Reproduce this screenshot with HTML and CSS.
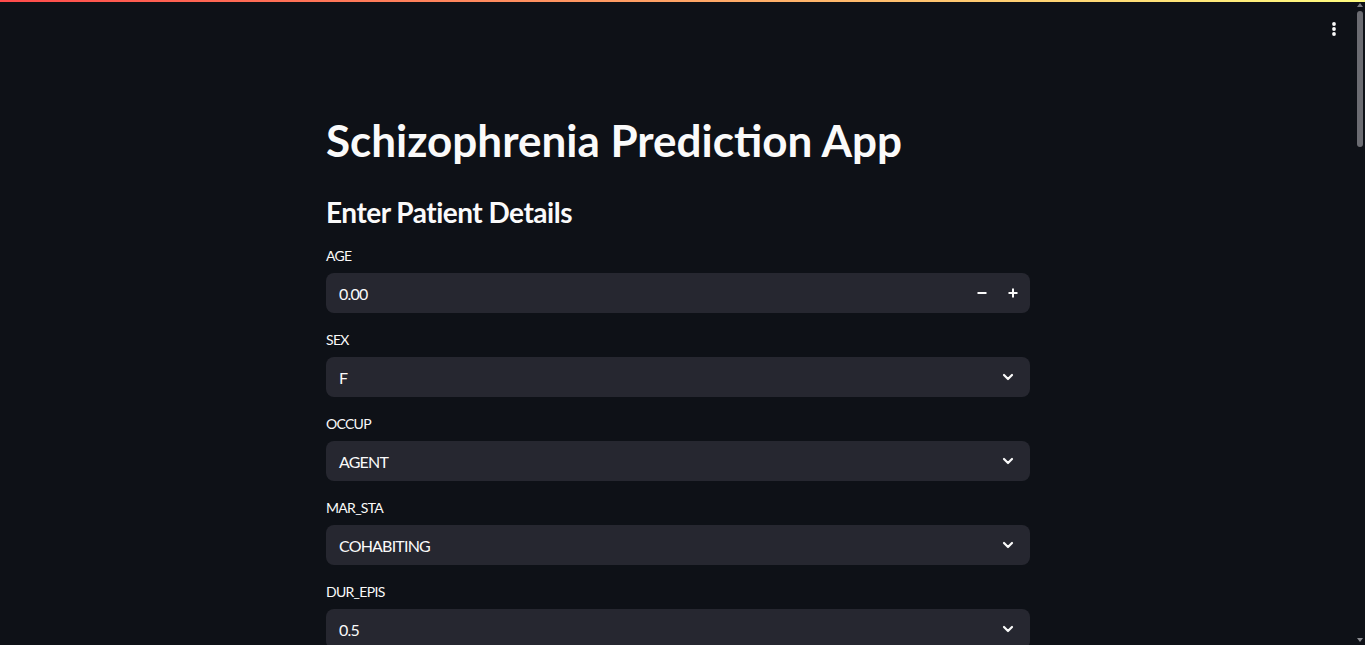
FILE: index.html
```html
<!DOCTYPE html>
<html lang="en">
<head>
<meta charset="utf-8">
<title>Schizophrenia Prediction App</title>
<link rel="stylesheet" href="styles.css">
</head>
<body>
<div class="decoration"></div>
<header class="toolbar">
  <button class="menu" aria-label="Main menu">
    <svg width="16" height="16" viewBox="0 0 16 16"><circle cx="8" cy="3" r="1.9" fill="#fafafa"/><circle cx="8" cy="8" r="1.9" fill="#fafafa"/><circle cx="8" cy="13" r="1.9" fill="#fafafa"/></svg>
  </button>
</header>
<div class="scrollbar" aria-hidden="true">
  <span class="arrow up"></span>
  <span class="thumb"></span>
  <span class="arrow down"></span>
</div>
<div class="app">
<main class="block">
  <h1 class="title">Schizophrenia Prediction App</h1>
  <h2 class="subtitle">Enter Patient Details</h2>

  <div class="widget">
    <label class="label">AGE</label>
    <div class="field number">
      <span class="value">0.00</span>
      <div class="steps">
        <button class="step" aria-label="minus"><svg width="12" height="12" viewBox="0 0 12 12"><path d="M1.5 6h9" stroke="#fafafa" stroke-width="2"/></svg></button>
        <button class="step" aria-label="plus"><svg width="12" height="12" viewBox="0 0 12 12"><path d="M1.5 6h9M6 1.5v9" stroke="#fafafa" stroke-width="2"/></svg></button>
      </div>
    </div>
  </div>

  <div class="widget">
    <label class="label">SEX</label>
    <div class="field select"><span class="value">F</span><svg class="chev" width="16" height="16" viewBox="0 0 16 16"><path d="M4 6l4 4 4-4" fill="none" stroke="#fafafa" stroke-width="2.2" stroke-linecap="round" stroke-linejoin="round"/></svg></div>
  </div>

  <div class="widget">
    <label class="label">OCCUP</label>
    <div class="field select"><span class="value">AGENT</span><svg class="chev" width="16" height="16" viewBox="0 0 16 16"><path d="M4 6l4 4 4-4" fill="none" stroke="#fafafa" stroke-width="2.2" stroke-linecap="round" stroke-linejoin="round"/></svg></div>
  </div>

  <div class="widget">
    <label class="label">MAR_STA</label>
    <div class="field select"><span class="value">COHABITING</span><svg class="chev" width="16" height="16" viewBox="0 0 16 16"><path d="M4 6l4 4 4-4" fill="none" stroke="#fafafa" stroke-width="2.2" stroke-linecap="round" stroke-linejoin="round"/></svg></div>
  </div>

  <div class="widget">
    <label class="label">DUR_EPIS</label>
    <div class="field select"><span class="value">0.5</span><svg class="chev" width="16" height="16" viewBox="0 0 16 16"><path d="M4 6l4 4 4-4" fill="none" stroke="#fafafa" stroke-width="2.2" stroke-linecap="round" stroke-linejoin="round"/></svg></div>
  </div>
</main>
</div>
</body>
</html>
```
FILE: styles.css
```css
html {
  background: #0e1117;
}
body {
  margin: 0;
  height: 100vh;
  overflow: hidden;
  background: #0e1117;
  color: #fafafa;
  font-family: Lato, "Noto Sans", "Liberation Sans", sans-serif;
}
.decoration {
  position: fixed;
  top: 0;
  left: 0;
  right: 0;
  height: 2px;
  background: linear-gradient(90deg, #ff4b4b, #fffd80);
  z-index: 10;
}
.toolbar {
  position: fixed;
  top: 0;
  left: 0;
  right: 0;
  height: 60px;
  display: flex;
  justify-content: flex-end;
  align-items: flex-start;
  padding: 13px 15px 0 0;
  box-sizing: border-box;
  z-index: 5;
}
.menu {
  width: 32px;
  height: 32px;
  background: transparent;
  border: 0;
  padding: 0;
  display: flex;
  align-items: center;
  justify-content: center;
}
.scrollbar {
  position: fixed;
  top: 0;
  right: 0;
  width: 14px;
  height: 100vh;
  display: flex;
  flex-direction: column;
  align-items: flex-end;
  padding: 2px 2px 2px 0;
  box-sizing: border-box;
  z-index: 20;
}
.arrow {
  width: 0;
  height: 0;
  border-left: 3px solid transparent;
  border-right: 3px solid transparent;
}
.arrow.up {
  margin-top: 1px;
  border-bottom: 4px solid #7c7d82;
}
.arrow.down {
  margin-top: auto;
  margin-bottom: 1px;
  border-top: 4px solid #8a8b90;
}
.thumb {
  width: 6px;
  height: 136px;
  margin-top: 4px;
  border-radius: 3px;
  background: #6b6c72;
}
.app {
  padding-right: 9px;
}
.block {
  width: 704px;
  margin: 0 auto;
  padding: 96px 0 0;
  display: flex;
  flex-direction: column;
  gap: 15px;
}
.title {
  font-size: 44px;
  font-weight: 700;
  line-height: 1.2;
  margin: 0;
  padding: 18px 0 0;
}
.subtitle {
  font-size: 28px;
  font-weight: 700;
  letter-spacing: -0.5px;
  line-height: 1.2;
  margin: 1px 0 0;
  padding: 13px 0 0;
}
.widget {
  display: flex;
  flex-direction: column;
}
.label {
  font-size: 14px;
  line-height: 24px;
  height: 24px;
  margin-bottom: 5px;
  letter-spacing: -0.7px;
  color: #fafafa;
}
.field {
  height: 40px;
  border-radius: 8px;
  background: #262730;
  display: flex;
  align-items: center;
  padding-left: 13px;
  box-sizing: border-box;
  font-size: 16px;
}
.value {
  flex: 1;
  letter-spacing: -0.8px;
}
.steps {
  display: flex;
  height: 100%;
  padding-right: 2px;
}
.step {
  width: 31px;
  height: 100%;
  border: 0;
  background: transparent;
  display: flex;
  align-items: center;
  justify-content: center;
  padding: 0;
}
.select {
  padding-right: 14px;
}
.chev {
  display: block;
}
```
